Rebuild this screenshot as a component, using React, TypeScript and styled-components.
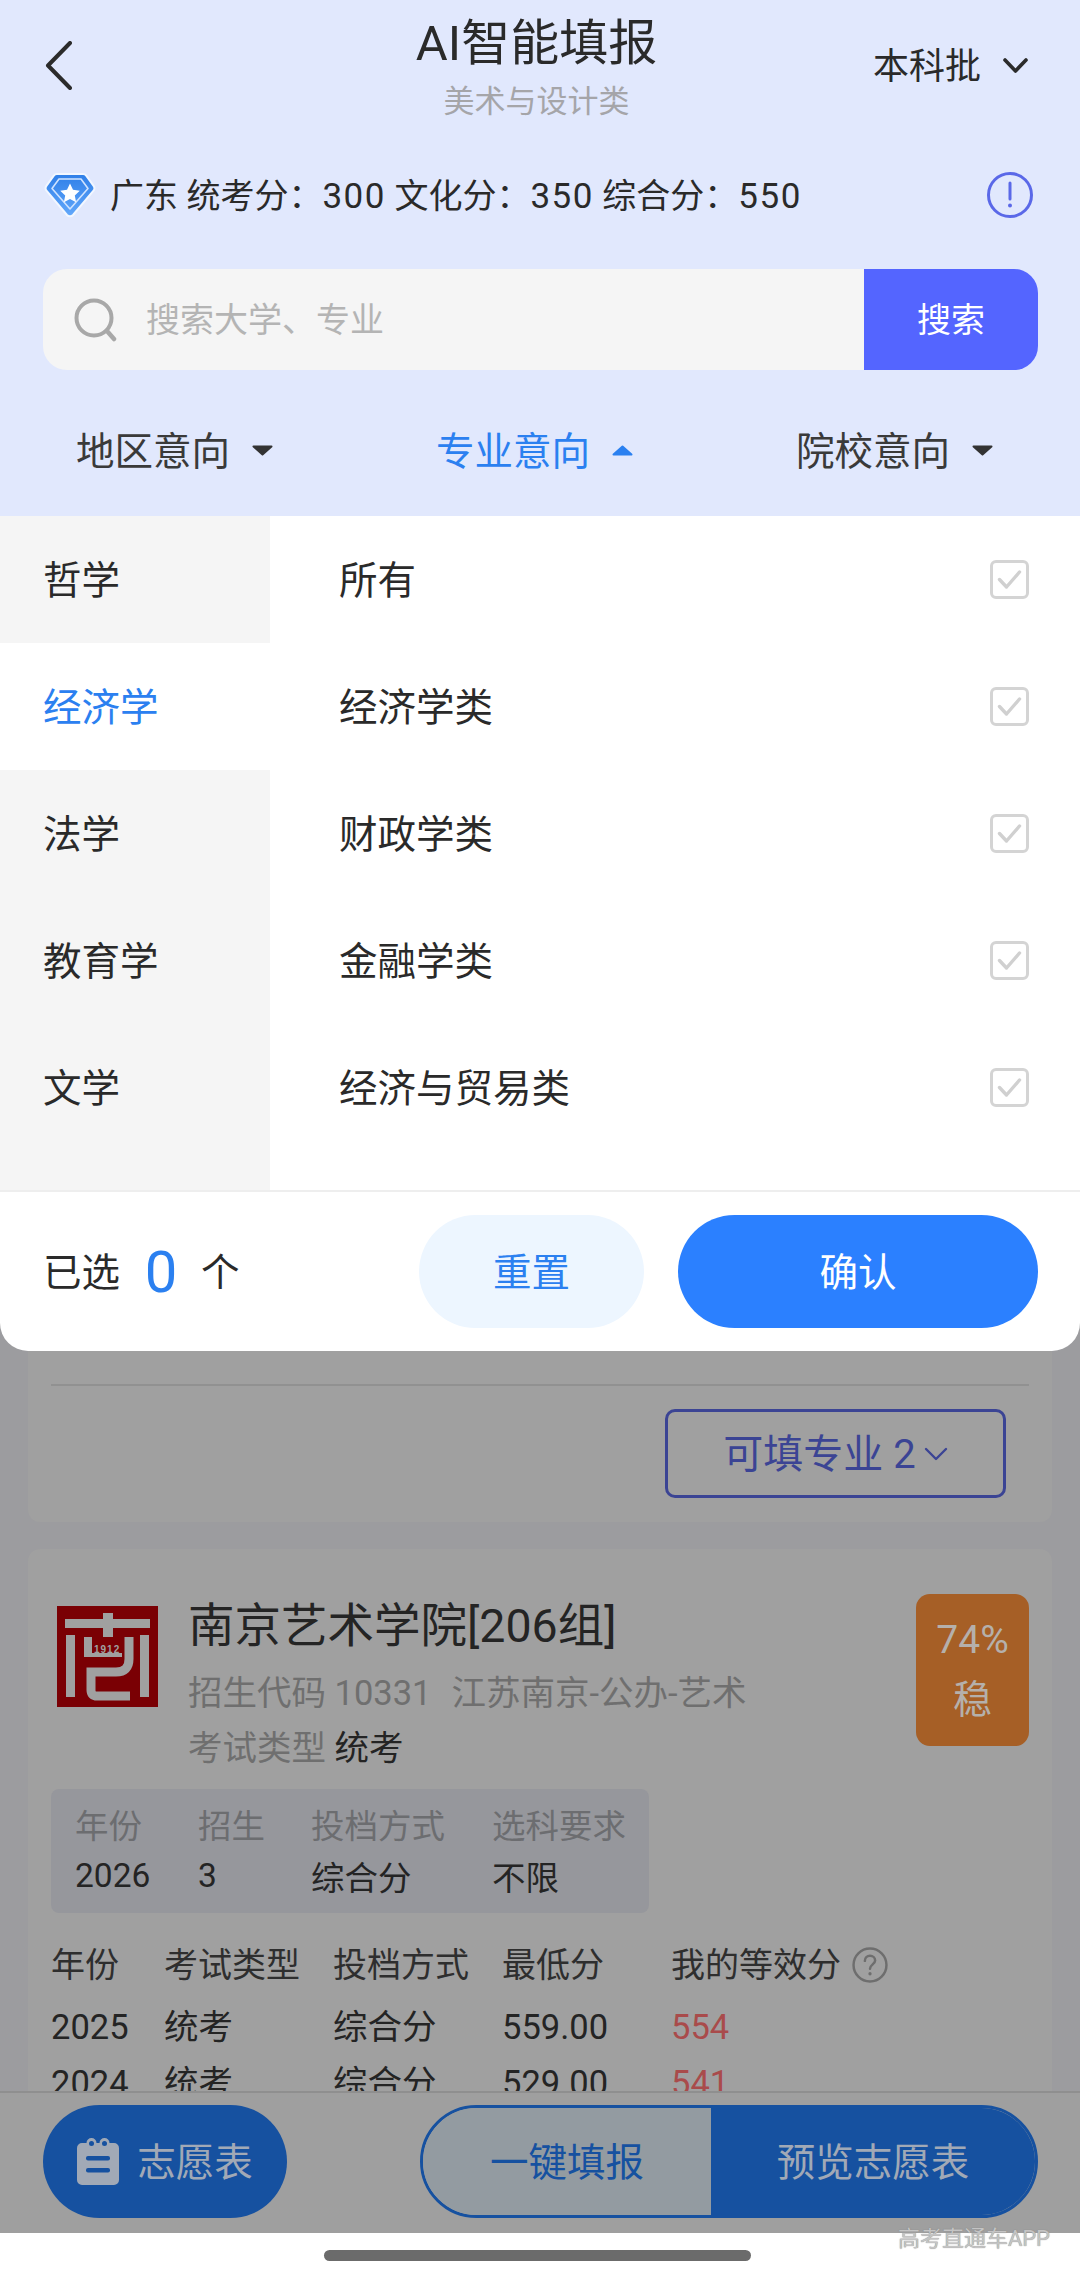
import styled, { createGlobalStyle } from "styled-components";

const FONT = `Roboto, "Noto Sans CJK SC", sans-serif`;

const categories = ["哲学", "经济学", "法学", "教育学", "文学"];
const majors = ["所有", "经济学类", "财政学类", "金融学类", "经济与贸易类"];
const filters = [
  { label: "地区意向", open: false },
  { label: "专业意向", open: true },
  { label: "院校意向", open: false },
];
const scores = [
  { label: "统考分", value: "300" },
  { label: "文化分", value: "350" },
  { label: "综合分", value: "550" },
];
const planHead = ["年份", "招生", "投档方式", "选科要求"];
const planRow = ["2026", "3", "综合分", "不限"];
const history = [
  ["2025", "统考", "综合分", "559.00", "554"],
  ["2024", "统考", "综合分", "529.00", "541"],
];

export default function App() {
  return (
    <Page>
      <GlobalStyle />
      <Header>
        <TopBar>
          <BackButton>
            <svg width="27" height="49" viewBox="0 0 27 49" fill="none">
              <path d="M25 2 3 24.5 25 47" stroke="#2b2b2b" strokeWidth="4" strokeLinecap="round" strokeLinejoin="round" />
            </svg>
          </BackButton>
          <TitleBlock>
            <Title>AI智能填报</Title>
            <SubTitle>美术与设计类</SubTitle>
          </TitleBlock>
          <BatchPicker>
            <Lifted>本科批</Lifted>
            <svg width="25" height="15" viewBox="0 0 25 15" fill="none">
              <path d="M2 2 12.5 13 23 2" stroke="#2b2b2b" strokeWidth="3.6" strokeLinecap="round" strokeLinejoin="round" />
            </svg>
          </BatchPicker>
        </TopBar>

        <ScoreRow>
          <ScoreInfo>
            <svg width="52" height="48" viewBox="0 0 52 48">
              <defs>
                <linearGradient id="gem" x1="0" y1="0" x2="0" y2="1">
                  <stop offset="0" stopColor="#2f7fe8" />
                  <stop offset="1" stopColor="#62a8fb" />
                </linearGradient>
              </defs>
              <path d="M13 3h26a4 4 0 0 1 3.2 1.6l7.4 10.2a4 4 0 0 1-.3 5L29 44a4 4 0 0 1-6 0L2.700 19.800a4 4 0 0 1-.3-5L9.800 4.600A4 4 0 0 1 13 3Z" fill="url(#gem)" stroke="#f2f7ff" strokeWidth="2" />
              <path d="M15 8h22l7 9.500L26 38 8 17.500Z" fill="none" stroke="#cfe3ff" strokeWidth="1.600" strokeLinejoin="round" />
              <path d="m26 12.500 3 6.300 6.800.9-5 4.700 1.300 6.800-6.100-3.300-6.100 3.300 1.300-6.800-5-4.700 6.800-.9Z" fill="#fff" />
            </svg>
            <ScoreText>
              广东
              {scores.map((s) => (
                <span key={s.label}>
                  {" "}
                  {s.label}：<ScoreValue>{s.value}</ScoreValue>
                </span>
              ))}
            </ScoreText>
          </ScoreInfo>
          <svg width="46" height="46" viewBox="0 0 46 46" fill="none">
            <circle cx="23" cy="23" r="21.500" stroke="#5a68e8" strokeWidth="3" />
            <path d="M23 11v16" stroke="#5a68e8" strokeWidth="3" strokeLinecap="round" />
            <circle cx="23" cy="33.500" r="2" fill="#5a68e8" />
          </svg>
        </ScoreRow>

        <SearchBar>
          <SearchField>
            <svg width="44" height="44" viewBox="0 0 44 44" fill="none">
              <circle cx="20" cy="20" r="17.500" stroke="#a8a8a8" strokeWidth="4" />
              <path d="m33 33 7 8" stroke="#a8a8a8" strokeWidth="4.500" strokeLinecap="round" />
            </svg>
            <Placeholder>搜索大学、专业</Placeholder>
          </SearchField>
          <SearchButton>搜索</SearchButton>
        </SearchBar>

        <FilterTabs>
          {filters.map((f) => (
            <FilterTab key={f.label} $open={f.open}>
              <Lifted>{f.label}</Lifted>
              <svg width="21" height="11" viewBox="0 0 21 11">
                <path
                  d={f.open ? "M10.500 1.500 19.500 9.500H1.500Z" : "M1.500 1.500H19.500L10.500 9.500Z"}
                  fill={f.open ? "#2b80f0" : "#333"}
                  stroke={f.open ? "#2b80f0" : "#333"}
                  strokeWidth="2"
                  strokeLinejoin="round"
                />
              </svg>
            </FilterTab>
          ))}
        </FilterTabs>
      </Header>

      <Panel>
        <PanelBody>
          <CategoryList>
            {categories.map((c) => (
              <CategoryItem key={c} $active={c === "经济学"}>
                <Lifted>{c}</Lifted>
              </CategoryItem>
            ))}
          </CategoryList>
          <MajorList>
            {majors.map((m) => (
              <MajorItem key={m}>
                <Lifted>{m}</Lifted>
                <CheckBox>
                  <svg width="25" height="21" viewBox="0 0 25 21" fill="none">
                    <path d="M2.500 10.500 9.500 18 22.500 3" stroke="#d0d0d0" strokeWidth="3.400" strokeLinecap="round" strokeLinejoin="round" />
                  </svg>
                </CheckBox>
              </MajorItem>
            ))}
          </MajorList>
        </PanelBody>
        <PanelFooter>
          <Picked>
            <Lifted>已选</Lifted>
            <PickedCount>0</PickedCount>
            <Lifted>个</Lifted>
          </Picked>
          <ResetButton>
            <Lifted>重置</Lifted>
          </ResetButton>
          <ConfirmButton>
            <Lifted>确认</Lifted>
          </ConfirmButton>
        </PanelFooter>
      </Panel>

      <ResultList>
        <TailCard>
          <TailDivider />
          <MajorsButton>
            <Lifted>可填专业 2</Lifted>
            <svg width="24" height="14" viewBox="0 0 24 14" fill="none">
              <path d="M2 2 12 12 22 2" stroke="#3b4494" strokeWidth="2.400" strokeLinecap="round" strokeLinejoin="round" />
            </svg>
          </MajorsButton>
        </TailCard>

        <SchoolCard>
          <SchoolHead>
            <SchoolLogo viewBox="0 0 101 101">
              <rect width="101" height="101" fill="#7a0004" />
              <g fill="#a0a0a0">
                <rect x="8" y="13" width="85" height="9" />
                <rect x="46" y="7" width="10" height="24" />
                <rect x="9" y="29" width="9" height="62" />
                <rect x="83" y="29" width="9" height="62" />
                <rect x="27" y="31" width="8" height="18" />
                <rect x="27" y="47" width="38" height="4" />
              </g>
              <path d="M72 31v22q0 13-13 13H34v18q0 6 6 6h33" fill="none" stroke="#a0a0a0" strokeWidth="9" />
              <LogoYear x="37" y="47">1912</LogoYear>
            </SchoolLogo>
            <SchoolInfo>
              <SchoolName>南京艺术学院[206组]</SchoolName>
              <SchoolMeta>
                招生代码 10331<MetaPlace>江苏南京-公办-艺术</MetaPlace>
              </SchoolMeta>
              <ExamLine>
                考试类型 <strong>统考</strong>
              </ExamLine>
            </SchoolInfo>
            <ChanceBadge>
              <span>74%</span>
              <span>稳</span>
            </ChanceBadge>
          </SchoolHead>

          <PlanBox>
            {planHead.map((h) => (
              <PlanLabel key={h}>{h}</PlanLabel>
            ))}
            {planRow.map((v) => (
              <PlanValue key={v}>{v}</PlanValue>
            ))}
          </PlanBox>

          <HistoryTable>
            <HistoryHead>年份</HistoryHead>
            <HistoryHead>考试类型</HistoryHead>
            <HistoryHead>投档方式</HistoryHead>
            <HistoryHead>最低分</HistoryHead>
            <HistoryHead>
              我的等效分
              <svg width="36" height="36" viewBox="0 0 35 35" fill="none">
                <circle cx="17.500" cy="17.500" r="16" stroke="#6e6e6e" strokeWidth="2.400" />
                <path d="M12.500 13.500c0-3 2.200-5 5-5s5 2 5 4.600c0 3.600-5 4-5 8" stroke="#6e6e6e" strokeWidth="2.400" strokeLinecap="round" />
                <circle cx="17.500" cy="26" r="1.600" fill="#6e6e6e" />
              </svg>
            </HistoryHead>
            {history.map((row) =>
              row.map((cell, i) => (
                <HistoryCell key={row[0] + i} $mine={i === 4}>
                  {cell}
                </HistoryCell>
              ))
            )}
          </HistoryTable>
        </SchoolCard>
      </ResultList>

      <BottomBar>
        <WishButton>
          <svg width="42" height="47" viewBox="0 0 42 47">
            <path d="M5 5h4.500a5 5 0 0 1 10 0h3a5 5 0 0 1 10 0H37a5 5 0 0 1 5 5v32a5 5 0 0 1-5 5H5a5 5 0 0 1-5-5V10a5 5 0 0 1 5-5Z" fill="#a1a9b6" />
            <rect x="9" y="18" width="24" height="4.500" rx="2" fill="#1651a0" />
            <rect x="9" y="30" width="24" height="4.500" rx="2" fill="#1651a0" />
            <circle cx="14.500" cy="5.500" r="2.500" fill="#1651a0" />
            <circle cx="27.500" cy="5.500" r="2.500" fill="#1651a0" />
          </svg>
          <Lifted>志愿表</Lifted>
        </WishButton>
        <ActionGroup>
          <QuickFill>
            <Lifted>一键填报</Lifted>
          </QuickFill>
          <PreviewButton>
            <Lifted>预览志愿表</Lifted>
          </PreviewButton>
        </ActionGroup>
      </BottomBar>

      <HomeArea>
        <HomeIndicator />
        <Watermark>高考直通车APP</Watermark>
      </HomeArea>
    </Page>
  );
}

const GlobalStyle = createGlobalStyle`
  html, body {
    margin: 0;
    padding: 0;
    background: #fff;
  }
  * {
    box-sizing: border-box;
  }
`;

const Page = styled.div`
  width: 1080px;
  height: 2278px;
  overflow: hidden;
  display: flex;
  flex-direction: column;
  background: #9c9c9f;
  font-family: ${FONT};
  color: #2a2a2a;
`;

/* Noto's CJK glyphs sit a little low compared with the reference font */
const Lifted = styled.span`
  margin-bottom: 5px;
`;

const Header = styled.header`
  height: 516px;
  flex: none;
  background: #e1e8fd;
  display: flex;
  flex-direction: column;
`;

const TopBar = styled.div`
  height: 130px;
  padding: 0 52px 0 45px;
  display: grid;
  grid-template-columns: 1fr auto 1fr;
  align-items: center;
`;

const BackButton = styled.div`
  display: flex;
  align-items: center;
`;

const TitleBlock = styled.div`
  align-self: start;
  padding-top: 14px;
  text-align: center;
`;

const Title = styled.div`
  font-size: 49px;
  line-height: 60px;
`;

const SubTitle = styled.div`
  margin-top: 6px;
  font-size: 31px;
  line-height: 44px;
  color: #a5a5a9;
`;

const BatchPicker = styled.div`
  justify-self: end;
  display: flex;
  align-items: center;
  gap: 22px;
  font-size: 36px;
`;

const ScoreRow = styled.div`
  margin-top: 35px;
  height: 60px;
  padding: 0 47px 0 44px;
  display: flex;
  align-items: center;
  justify-content: space-between;
`;

const ScoreInfo = styled.div`
  display: flex;
  align-items: center;
  gap: 14px;
`;

const ScoreText = styled.span`
  margin-bottom: 4px;
  font-size: 34px;
  white-space: pre;
`;

const ScoreValue = styled.span`
  font-size: 35px;
  letter-spacing: 1.5px;
`;

const SearchBar = styled.div`
  margin: 44px 42px 0 43px;
  height: 101px;
  display: flex;
  border-radius: 24px;
  overflow: hidden;
`;

const SearchField = styled.div`
  flex: 1;
  display: flex;
  align-items: center;
  gap: 28px;
  padding-left: 31px;
  background: #f5f5f5;
`;

const Placeholder = styled.span`
  margin-bottom: 5px;
  font-size: 34px;
  color: #b4b4b4;
`;

const SearchButton = styled.div`
  width: 174px;
  padding-bottom: 5px;
  display: flex;
  align-items: center;
  justify-content: center;
  background: #5465ff;
  color: #fff;
  font-size: 34px;
`;

const FilterTabs = styled.div`
  margin-top: 30px;
  height: 100px;
  padding-left: 76px;
  display: grid;
  grid-template-columns: repeat(3, 360px);
`;

const FilterTab = styled.div<{ $open: boolean }>`
  display: flex;
  align-items: center;
  gap: 22px;
  font-size: 38.5px;
  color: ${(p) => (p.$open ? "#2b80f0" : "#3a3a3a")};
`;

const Panel = styled.section`
  height: 835px;
  flex: none;
  display: flex;
  flex-direction: column;
  background: #fff;
  border-radius: 0 0 28px 28px;
  overflow: hidden;
`;

const PanelBody = styled.div`
  height: 676px;
  display: flex;
  border-bottom: 2px solid #eeeeee;
`;

const CategoryList = styled.div`
  width: 270px;
  background: #f5f5f5;
`;

const CategoryItem = styled.div<{ $active: boolean }>`
  height: 127px;
  padding-left: 43px;
  display: flex;
  align-items: center;
  font-size: 38.5px;
  background: ${(p) => (p.$active ? "#fff" : "transparent")};
  color: ${(p) => (p.$active ? "#2b80f0" : "#2a2a2a")};
`;

const MajorList = styled.div`
  flex: 1;
`;

const MajorItem = styled.div`
  height: 127px;
  padding: 0 51px 0 69px;
  display: flex;
  align-items: center;
  justify-content: space-between;
  font-size: 38.5px;
`;

const CheckBox = styled.span`
  width: 39px;
  height: 39px;
  display: flex;
  align-items: center;
  justify-content: center;
  border: 3px solid #d4d4d4;
  border-radius: 6px;
`;

const PanelFooter = styled.div`
  flex: 1;
  padding: 0 42px 0 43px;
  display: flex;
  align-items: center;
`;

const Picked = styled.div`
  width: 376px;
  display: flex;
  align-items: center;
  font-size: 38.5px;
`;

const PickedCount = styled.span`
  width: 58px;
  margin: 0 11px 0 12px;
  font-size: 58px;
  line-height: 70px;
  color: #2b80f0;
  text-align: center;
`;

const ResetButton = styled.div`
  width: 225px;
  height: 113px;
  display: flex;
  align-items: center;
  justify-content: center;
  border-radius: 57px;
  background: #edf6ff;
  color: #2b80f0;
  font-size: 38.5px;
`;

const ConfirmButton = styled.div`
  width: 360px;
  height: 113px;
  margin-left: 34px;
  display: flex;
  align-items: center;
  justify-content: center;
  border-radius: 57px;
  background: #2b80ff;
  color: #fff;
  font-size: 38.5px;
`;

const ResultList = styled.div`
  height: 740px;
  flex: none;
  padding: 0 28px;
  overflow: hidden;
  display: flex;
  flex-direction: column;
  gap: 27px;
`;

const TailCard = styled.div`
  flex: none;
  height: 171px;
  padding: 33px 23px 0;
  background: #a0a0a0;
  border-radius: 0 0 12px 12px;
  display: flex;
  flex-direction: column;
  align-items: flex-end;
`;

const TailDivider = styled.div`
  width: 100%;
  height: 2px;
  background: #919191;
`;

const MajorsButton = styled.div`
  width: 341px;
  height: 89px;
  margin: 23px 23px 0 0;
  display: flex;
  align-items: center;
  justify-content: center;
  gap: 8px;
  border: 3px solid #3b4494;
  border-radius: 10px;
  color: #3b4494;
  font-size: 40px;
`;

const SchoolCard = styled.div`
  flex: none;
  padding: 45px 23px 0;
  background: #a0a0a0;
  border-radius: 12px 12px 0 0;
`;

const SchoolHead = styled.div`
  display: flex;
  align-items: flex-start;
`;

const SchoolLogo = styled.svg`
  width: 101px;
  height: 101px;
  flex: none;
  margin: 12px 0 0 6px;
`;

const LogoYear = styled.text`
  font-family: "Liberation Sans", sans-serif;
  font-size: 10px;
  font-weight: 700;
  letter-spacing: 1px;
  fill: #a0a0a0;
`;

const SchoolInfo = styled.div`
  flex: 1;
  margin: 7px 0 0 30px;
`;

const SchoolName = styled.div`
  font-size: 46.5px;
  line-height: 50px;
  color: #242424;
`;

const SchoolMeta = styled.div`
  margin-top: 19px;
  font-size: 34.5px;
  line-height: 46px;
  color: #6f6f6f;
  white-space: nowrap;
`;

const MetaPlace = styled.span`
  margin-left: 20px;
`;

const ExamLine = styled(SchoolMeta)`
  margin-top: 9px;

  strong {
    font-weight: 400;
    color: #242424;
  }
`;

const ChanceBadge = styled.div`
  width: 113px;
  height: 152px;
  flex: none;
  display: flex;
  flex-direction: column;
  align-items: center;
  justify-content: center;
  gap: 16px;
  border-radius: 14px;
  background: #a65f26;
  color: #b5b0ab;
  font-size: 39px;
  line-height: 44px;
`;

const PlanBox = styled.div`
  width: 598px;
  height: 124px;
  margin-top: 18px;
  padding: 8px 0 12px 24px;
  display: grid;
  grid-template-columns: 123px 113px 181px 1fr;
  grid-auto-rows: 52px;
  align-items: center;
  border-radius: 8px;
  background: #96979c;
  font-size: 33.5px;
`;

const PlanLabel = styled.span`
  color: #6c6d70;
`;

const PlanValue = styled.span`
  color: #242424;
`;

const HistoryTable = styled.div`
  margin: 27px 0 0 0;
  display: grid;
  grid-template-columns: 113px 169px 169px 169px 1fr;
  grid-template-rows: 59px repeat(2, 56px);
  align-items: start;
  font-size: 34.5px;
  line-height: 50px;
`;

const HistoryHead = styled.div`
  display: flex;
  align-items: center;
  gap: 11px;
  font-size: 34px;
  color: #2e2e2e;
`;

const HistoryCell = styled.div<{ $mine: boolean }>`
  margin-top: 3px;
  color: ${(p) => (p.$mine ? "#a94b4b" : "#242424")};
`;

const BottomBar = styled.footer`
  height: 142px;
  flex: none;
  padding: 12px 42px 0 43px;
  display: flex;
  align-items: flex-start;
  justify-content: space-between;
  background: #9f9f9f;
  border-top: 2px solid #8f8f8f;
`;

const WishButton = styled.div`
  width: 244px;
  height: 113px;
  display: flex;
  align-items: center;
  justify-content: center;
  gap: 18px;
  border-radius: 57px;
  background: #1651a0;
  color: #a1a9b6;
  font-size: 38.5px;
`;

const ActionGroup = styled.div`
  width: 618px;
  height: 113px;
  display: flex;
  border-radius: 57px;
  border: 3px solid #1651a0;
  overflow: hidden;
  font-size: 38.5px;
`;

const QuickFill = styled.div`
  width: 288px;
  display: flex;
  align-items: center;
  justify-content: center;
  background: #939ba1;
  color: #1651a0;
`;

const PreviewButton = styled.div`
  flex: 1;
  display: flex;
  align-items: center;
  justify-content: center;
  background: #1651a0;
  color: #a1a9b6;
`;

const HomeArea = styled.div`
  position: relative;
  flex: 1;
  padding-top: 17px;
  display: flex;
  justify-content: center;
  background: #fff;
`;

const HomeIndicator = styled.div`
  width: 427px;
  height: 11px;
  margin-left: -6px;
  border-radius: 6px;
  background: #6b6b6b;
`;

const Watermark = styled.div`
  position: absolute;
  right: 30px;
  top: -8px;
  font-size: 22px;
  line-height: 28px;
  color: #c4c4c4;
  text-shadow: 0 0 1px #777;
  white-space: nowrap;
`;
